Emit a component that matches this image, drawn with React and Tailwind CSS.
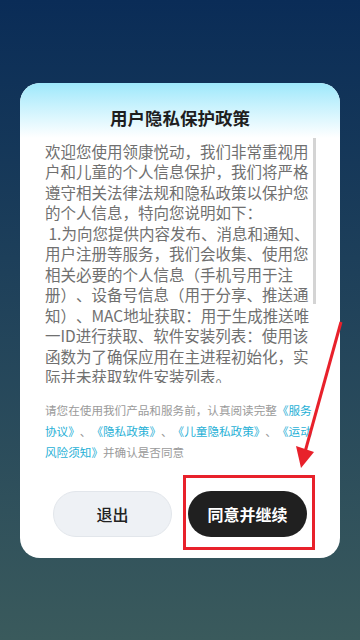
const bodyLines = [
  '欢迎您使用领康悦动，我们非常重视用',
  '户和儿童的个人信息保护，我们将严格',
  '遵守相关法律法规和隐私政策以保护您',
  '的个人信息，特向您说明如下：',
  '\u00a01.为向您提供内容发布、消息和通知、',
  '用户注册等服务，我们会收集、使用您',
  '相关必要的个人信息（手机号用于注',
  '册）、设备号信息（用于分享、推送通',
  '知）、MAC地址获取：用于生成推送唯',
  '一ID进行获取、软件安装列表：使用该',
  '函数为了确保应用在主进程初始化，实',
  '际并未获取软件安装列表。',
]

function Link({ children }) {
  return <span className="text-[#1fb0d6]">{children}</span>
}

export default function App() {
  return (
    <div
      className="relative w-[360px] h-[640px] flex items-center justify-center bg-gradient-to-b from-[#0a2c57] to-[#3a5a5c] overflow-hidden [text-spacing-trim:space-all]"
      style={{ fontFamily: '"Noto Sans CJK SC", "Noto Sans", sans-serif' }}
    >
      {/* dialog */}
      <div className="w-[320px] h-[475px] bg-white rounded-[20px] overflow-hidden flex flex-col">
        {/* header */}
        <div className="h-[55px] pt-[23px] bg-gradient-to-b from-[#9de8fb] to-white">
          <h1 className="text-center text-[17.5px] leading-[24px] font-semibold text-[#1e1e1e]">
            用户隐私保护政策
          </h1>
        </div>

        {/* scrolling body */}
        <div className="relative ml-[25px] w-[271px] h-[245px] overflow-hidden">
          <div className="pt-[3px] text-[15.5px] leading-[20.5px] text-[#707070]">
            {bodyLines.map((line, i) => (
              <div key={i} className="whitespace-nowrap">{line}</div>
            ))}
          </div>
          <div className="absolute top-0 right-0 w-[3px] h-[166px] bg-[#d4d4d4]" />
        </div>

        {/* agreement note */}
        <p className="mt-[17.5px] ml-[25px] text-[11.6px] leading-[21px] text-[#9a9a9a] whitespace-nowrap">
          请您在使用我们产品和服务前，认真阅读完整<Link>《服务</Link>
          <br />
          <Link>协议》</Link>、<Link>《隐私政策》</Link>、<Link>《儿童隐私政策》</Link>、<Link>《运动</Link>
          <br />
          <Link>风险须知》</Link>并确认是否同意
        </p>

        {/* actions */}
        <div className="mt-[27.5px] px-[33px] flex gap-[16px]">
          <button className="w-[119px] h-[46px] rounded-full bg-[#eef1f5] border border-[#e2e6eb] text-[16px] font-medium text-[#222]">
            退出
          </button>
          <button className="w-[119px] h-[46px] rounded-full bg-[#202020] text-[16px] font-semibold text-white">
            同意并继续
          </button>
        </div>
      </div>

      {/* red annotation */}
      <svg className="absolute inset-0 pointer-events-none" width="360" height="640" viewBox="0 0 360 640">
        <rect x="184.5" y="476.5" width="129" height="72" fill="none" stroke="#e8212b" strokeWidth="3" />
        <line x1="341" y1="322" x2="305" y2="452" stroke="#e8212b" strokeWidth="3" />
        <polygon points="296,446 314,452 301,468" fill="#e8212b" />
      </svg>
    </div>
  )
}
